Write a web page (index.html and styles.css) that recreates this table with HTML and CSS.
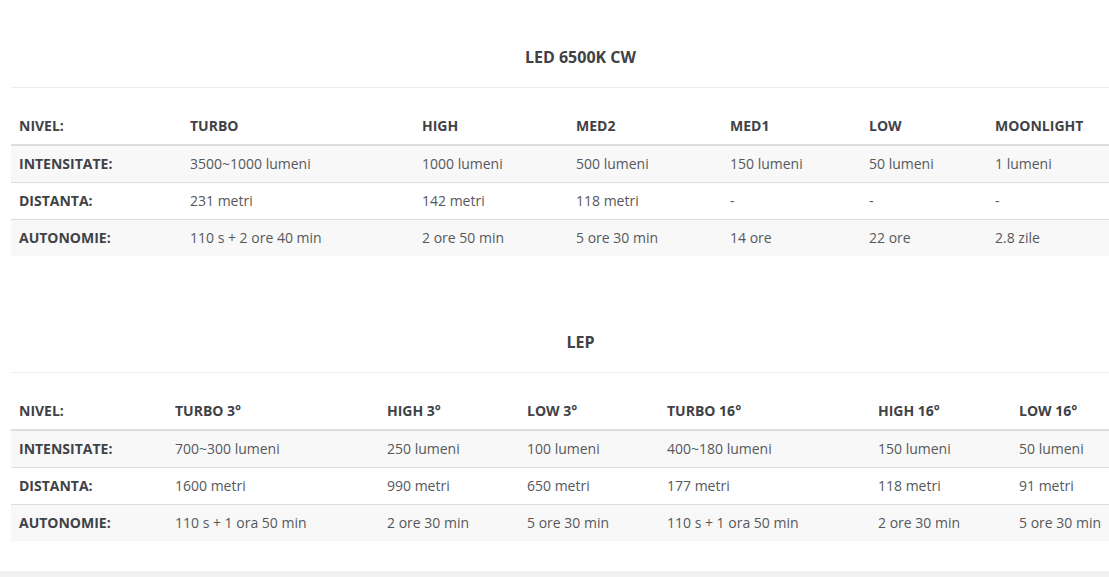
FILE: index.html
```html
<!DOCTYPE html>
<html lang="ro">
<head>
<meta charset="utf-8">
<title>Specificații</title>
<link rel="stylesheet" href="styles.css">
</head>
<body>
<main class="page">
  <section class="spec spec-first">
    <h3 class="spec-title">LED 6500K CW</h3>
    <table class="spec-table">
      <colgroup>
        <col class="c171"><col class="c232"><col class="c154"><col class="c154"><col class="c139"><col class="c126"><col>
      </colgroup>
      <thead>
        <tr><th>NIVEL:</th><th>TURBO</th><th>HIGH</th><th>MED2</th><th>MED1</th><th>LOW</th><th>MOONLIGHT</th></tr>
      </thead>
      <tbody>
        <tr><th>INTENSITATE:</th><td>3500~1000 lumeni</td><td>1000 lumeni</td><td>500 lumeni</td><td>150 lumeni</td><td>50 lumeni</td><td>1 lumeni</td></tr>
        <tr><th>DISTANTA:</th><td>231 metri</td><td>142 metri</td><td>118 metri</td><td>-</td><td>-</td><td>-</td></tr>
        <tr><th>AUTONOMIE:</th><td>110 s + 2 ore 40 min</td><td>2 ore 50 min</td><td>5 ore 30 min</td><td>14 ore</td><td>22 ore</td><td>2.8 zile</td></tr>
      </tbody>
    </table>
  </section>
  <section class="spec">
    <h3 class="spec-title">LEP</h3>
    <table class="spec-table">
      <colgroup>
        <col class="c156"><col class="c212"><col class="c140"><col class="c140"><col class="c211"><col class="c141"><col>
      </colgroup>
      <thead>
        <tr><th>NIVEL:</th><th>TURBO 3°</th><th>HIGH 3°</th><th>LOW 3°</th><th>TURBO 16°</th><th>HIGH 16°</th><th>LOW 16°</th></tr>
      </thead>
      <tbody>
        <tr><th>INTENSITATE:</th><td>700~300 lumeni</td><td>250 lumeni</td><td>100 lumeni</td><td>400~180 lumeni</td><td>150 lumeni</td><td>50 lumeni</td></tr>
        <tr><th>DISTANTA:</th><td>1600 metri</td><td>990 metri</td><td>650 metri</td><td>177 metri</td><td>118 metri</td><td>91 metri</td></tr>
        <tr><th>AUTONOMIE:</th><td>110 s + 1 ora 50 min</td><td>2 ore 30 min</td><td>5 ore 30 min</td><td>110 s + 1 ora 50 min</td><td>2 ore 30 min</td><td>5 ore 30 min</td></tr>
      </tbody>
    </table>
  </section>
</main>
<footer class="band"></footer>
</body>
</html>
```
FILE: styles.css
```css
html, body {
  margin: 0;
  padding: 0;
  overflow-x: hidden;
  background: #fff;
}
body {
  font-family: "Open Sans", "Liberation Sans", sans-serif;
  font-size: 14px;
  line-height: 20px;
  color: #3f4247;
}
.page {
  width: 1139px;
  padding-left: 11px;
}
.spec {
  padding: 44px 0 30px;
}
.spec-first {
  padding-top: 45px;
}
.spec-title {
  margin: 0;
  font-size: 16px;
  line-height: 24px;
  font-weight: 700;
  text-align: center;
  padding-bottom: 18px;
  border-bottom: 1px solid #ececec;
  color: #3e4146;
}
.spec-table {
  width: 1139px;
  margin-top: 20px;
  border-collapse: collapse;
  table-layout: fixed;
}
.spec-table th,
.spec-table td {
  text-align: left;
  padding: 8px;
  white-space: nowrap;
  vertical-align: middle;
}
.spec-table th {
  font-weight: 700;
}
.spec-table td {
  font-weight: 400;
  color: #55585c;
}
.spec-table thead th {
  border-bottom: 2px solid #dddddd;
}
.spec-table tbody tr {
  border-top: 1px solid #dddddd;
}
.spec-table thead + tbody tr:first-child {
  border-top: none;
}
.spec-table tbody tr:nth-child(odd) {
  background: #f8f8f8;
}
.c171 { width: 171px; }
.c232 { width: 232px; }
.c154 { width: 154px; }
.c139 { width: 139px; }
.c126 { width: 126px; }
.c156 { width: 156px; }
.c212 { width: 212px; }
.c211 { width: 211px; }
.c140 { width: 140px; }
.c141 { width: 141px; }
.band {
  height: 6px;
  background: #f1f1f1;
}
```
